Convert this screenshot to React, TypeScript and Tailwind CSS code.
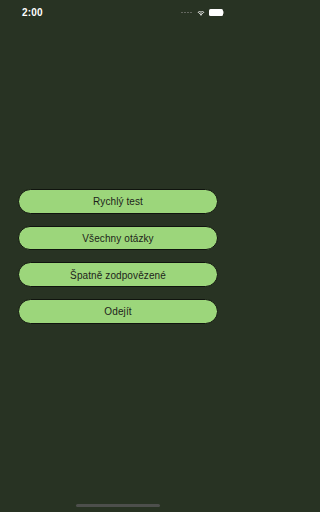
const buttons = ["Rychlý test", "Všechny otázky", "Špatně zodpovězené", "Odejít"];

function StatusBar() {
  return (
    <div className="flex items-center justify-between h-[24px] pl-[22px] pr-[12px] pt-[1px]">
      <span className="text-[10px] font-bold text-white leading-none tracking-[0.2px]">2:00</span>
      <div className="flex items-center gap-[4px]">
        <div className="flex items-end gap-[1px] mr-[1px]">
          {[0, 1, 2, 3].map((i) => (
            <div key={i} className="w-[2px] h-[1.5px] bg-[#6b6f68] rounded-[0.5px]" />
          ))}
        </div>
        <svg width="8" height="6" viewBox="0 0 16 12">
          <path d="M8 11.5 L5.6 9 A3.4 3.4 0 0 1 10.4 9 Z" fill="white" />
          <path d="M3.6 7 A6.3 6.3 0 0 1 12.4 7 L11.2 8.2 A4.6 4.6 0 0 0 4.8 8.2 Z" fill="white" />
          <path d="M1.2 4.6 A9.8 9.8 0 0 1 14.8 4.6 L13.6 5.8 A8 8 0 0 0 2.4 5.8 Z" fill="white" />
        </svg>
        <div className="flex items-center">
          <div className="w-[14px] h-[6.5px] rounded-[1.5px] bg-white" />
          <div className="w-[1px] h-[2.5px] bg-[#8c8f8a] ml-[0.5px] rounded-r-[1px]" />
        </div>
      </div>
    </div>
  );
}

export default function App() {
  return (
    <div className="min-h-screen w-full bg-[#283323]">
      <div className="w-[236px] h-[512px] bg-[#283323] flex flex-col font-['Liberation_Sans',sans-serif] relative overflow-hidden">
        <StatusBar />
        <div className="flex flex-col gap-[12px] px-[18px] mt-[165px]">
          {buttons.map((label) => (
            <button
              key={label}
              className="h-[24.7px] w-full rounded-full bg-[#9cd67b] border border-[#10140e] text-[#1c1f1a] text-[10px] leading-none flex items-center justify-center tracking-[0.1px] pt-[2px]"
            >
              {label}
            </button>
          ))}
        </div>
        <div className="absolute left-[76px] bottom-[5px] w-[84px] h-[3px] rounded-full bg-[#4d4f4c]" />
      </div>
    </div>
  );
}
